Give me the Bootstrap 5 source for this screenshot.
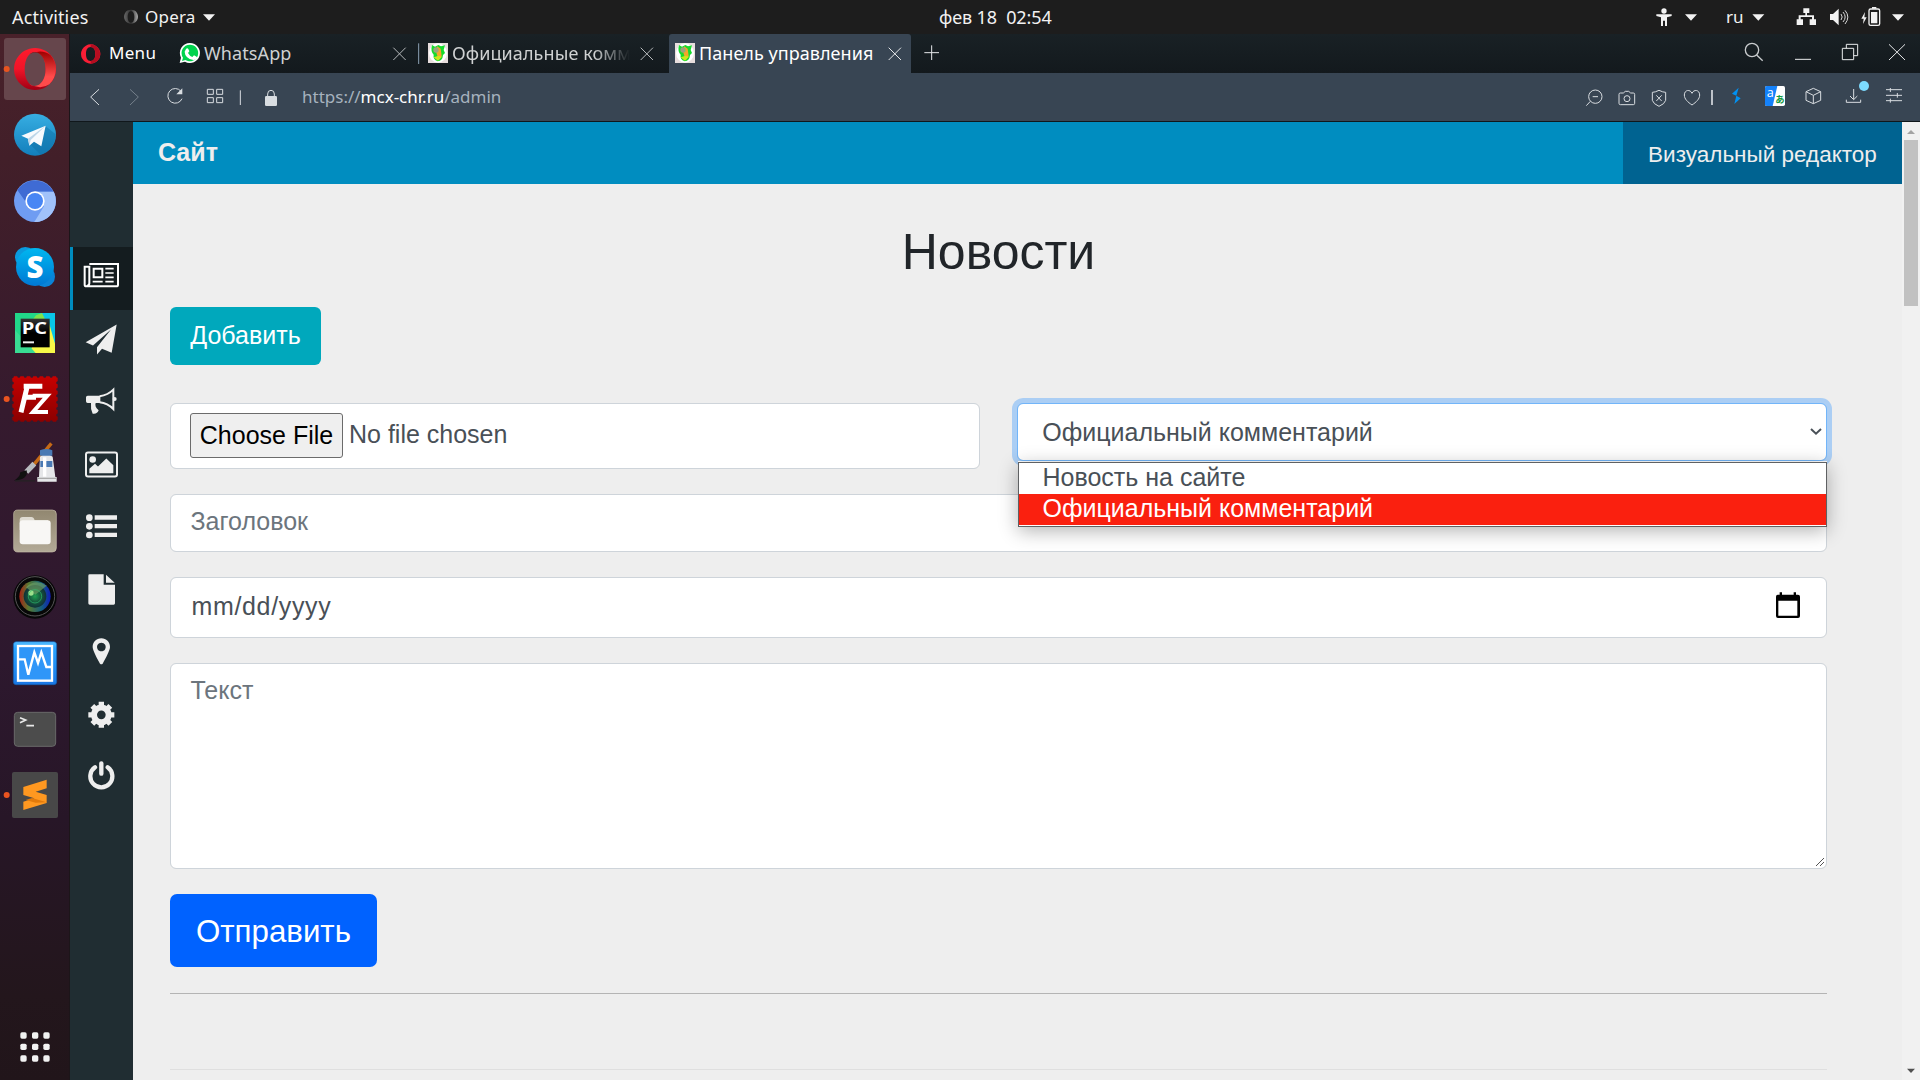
<!DOCTYPE html>
<html lang="ru">
<head>
<meta charset="utf-8">
<title>Панель управления</title>
<link href="https://cdn.jsdelivr.net/npm/bootstrap@5.3.0/dist/css/bootstrap.min.css" rel="stylesheet">
<style>
html{font-size:25px}
body{font-family:"Liberation Sans",Arial,sans-serif;background:#eee;width:1920px;height:1080px;overflow:hidden;color:#212529}
svg{display:block;flex:none}
.sysbar{height:34px;background:#1d1d1d;color:#f2f2f2}
.ubu{font-family:"Noto Sans","Open Sans",sans-serif;font-size:17px;white-space:pre;line-height:24px}
.clock{left:939px;top:5px;font-size:18px;letter-spacing:-.1px}
.dock{width:70px;background:linear-gradient(#49212a 0,#421f29 12%,#351a2e 36%,#2d182e 60%,#271627 75%,#23161c 92%,#21151a 100%);padding-top:2px;border-right:1px solid #1c1519}
.tabstrip{height:39px;background:linear-gradient(#192125,#13191d)}
.tabstrip .ubu{margin-bottom:2px}
.tab-act{background:#384553;border-radius:3px 3px 0 0}
.addr{height:49px;background:#384553;border-bottom:1px solid #10171b;color:#a6b2be}
.fade-end{width:178px;-webkit-mask-image:linear-gradient(90deg,#000 80%,transparent)}
.side{width:63px;background:#202d32;padding-top:5rem}
.side a{height:2.5rem;flex:none}
.side a.on{background:#141c1f;box-shadow:inset 3px 0 #008dbf}
.topnav{height:62px;background:#008dc0}
.brand-text{color:#eee;padding-left:25px;font-size:25px}
.visual{background:#006391;color:#eee;font-size:22.5px;width:279px;height:62px;padding-top:4px}
.main-col{width:1769px}
.content{padding:1.5rem 75px 0 37px}
.form-control{border-color:#ced4da;color:#495057;border-radius:6px;padding-left:19.5px}
.form-control::placeholder{color:#6c757d;opacity:1}
.btn-teal{background:#00a8bc;color:#fff;border-radius:6px;width:151px}
.btn-go{background:#0062ff;color:#fff;border-radius:7px;height:73px;padding-top:14px}
.h-file{height:66px;padding-top:9px;padding-left:19px}
.pick{background:#efefef;border:1px solid #6b6b6b;border-radius:3px;color:#000;width:153px;height:45px;line-height:43px}
.sel{height:58px;border-color:#72b5f9;box-shadow:0 0 0 5px #abcef4;padding-left:24px;padding-right:3px}
.pop{top:59px;left:19px;width:809px;height:65px;border:1px solid #5f6163;background:#fff;box-shadow:0 4px 18px rgba(0,0,0,.3),0 -1px 0 #fff;z-index:5;color:#495057}
.pop div{height:31px;padding-left:24px;line-height:28px}
.pop .hot{background:#fa200f;color:#fff}
.h-date{height:61px;padding-bottom:11px}
.h-date span{letter-spacing:.65px;padding-left:1px}
.h-title{height:58px;padding-bottom:11px}
textarea.form-control{height:206px;resize:none;padding-top:8px}
.grip{right:2px;bottom:2px}
.rule{height:1px;background:#b4b4b4}
.rule2{height:1px;background:#dfdfdf}
.sbar{width:18px;background:#f1f1f1}
.thumb{width:14px;height:166px;background:#c1c1c1}
.form-gap{margin-bottom:25px}
.ic text{font-family:"Open Sans",sans-serif}
</style>
</head>
<body class="d-flex flex-column">
<header class="sysbar d-flex align-items-center position-relative flex-shrink-0">
  <span class="ubu" style="margin-left:12px;width:111px;font-size:18px;letter-spacing:.15px">Activities</span>
  <svg width="16" height="34" viewBox="369 0 48 102"><defs><linearGradient id="gr"><stop stop-color="#666"/><stop offset=".5" stop-color="#333"/><stop offset="1" stop-color="#aaa"/></linearGradient></defs><path fill="url(#gr)" fill-rule="evenodd" d="M393 29a21 21 0 1 0 .1 0zM393 34c7 0 10 8 10 17s-3 17-10 17-10-8-10-17 3-17 10-17z"/></svg>
  <span class="ubu" style="margin-left:6px;width:57px;letter-spacing:.2px">Opera</span>
  <svg width="14" height="34" viewBox="606 0 42 102"><path fill="#f2f2f2" d="M609 43h36l-18 19z"/></svg>
  <span class="ubu clock position-absolute">фев 18  02:54</span>
  <div class="d-flex ms-auto align-items-center">
    <svg width="70" height="34" viewBox="330 0 210 102" fill="#f2f2f2"><circle cx="372" cy="33" r="8"/><path d="M349 43h46v5l-14 4v26h-6V62h-6v16h-6V52l-14-4zM435 43h36l-18 19z"/></svg>
    <span class="ubu" style="width:28px;padding-left:6px">ru</span>
    <svg width="172" height="34" viewBox="624 0 516 102" fill="#f2f2f2"><path d="M637 43h36l-18 19zM1056 43h36l-18 19z"/><path d="M790 25h18v14h-7v7h21v12h6v17h-19V58h7v-7h-34v7h7v17h-19V58h6V46h20v-7h-6zM870 42h9l17-16v50l-17-16h-9z"/><path d="M903 42q7 9 0 18M909 36q13 15 0 30M915 31q17 20 0 41" fill="none" stroke="#d8d8d8" stroke-width="3"/><path d="M975 36l-11 20h7l-2 16 11-20h-7z"/><rect x="987" y="27" width="32" height="49" rx="5" fill="none" stroke="#f2f2f2" stroke-width="4"/><path d="M996 21h13v5h-13zM993 36h19v34h-19z"/></svg>
  </div>
</header>

<div class="d-flex flex-grow-1">
<nav class="dock ic d-flex flex-column flex-shrink-0">
  <svg width="70" height="66" viewBox="0 18 210 198"><defs><linearGradient id="o1" x2="0" y2="1"><stop stop-color="#ff1b2d"/><stop offset=".5" stop-color="#f01428"/><stop offset="1" stop-color="#a00014"/></linearGradient><linearGradient id="o2" x2="0" y2="1"><stop stop-color="#9c0000"/><stop offset=".7" stop-color="#ff4b4b"/></linearGradient></defs><rect x="12" y="24" width="186" height="186" rx="9" fill="#66464c"/><circle cx="20" cy="117" r="9" fill="#e95420"/><path fill="url(#o1)" fill-rule="evenodd" d="M105 54a63 63 0 1 0 .1 0zM105 66c19 0 32 22 32 51s-13 51-32 51-31-22-31-51 13-51 31-51z"/><path fill="url(#o2)" d="M88 72q39-17 63 3a63 63 0 0 1-3 88q-25 17-60 0c27 16 49-10 49-46s-22-61-49-45z"/></svg>
  <svg width="70" height="66" viewBox="0 216 210 198"><defs><linearGradient id="t1" x2="0" y2="1"><stop stop-color="#37aee2"/><stop offset="1" stop-color="#127fbc"/></linearGradient></defs><circle cx="105" cy="314" r="63" fill="url(#t1)"/><path fill="#0d6fa5" opacity=".5" d="M136 288l31 25a63 63 0 0 1-45 61l-35-34z"/><path fill="#f6fafd" d="M137 287L64 317l20 9 4 21 14-12 22 14z"/><path fill="#bcd6e8" d="M137 287l-53 39 4 21 4-17z"/></svg>
  <svg width="70" height="66" viewBox="0 414 210 198"><circle cx="105" cy="513" r="63" fill="#6f9cf2"/><path fill="#3f6bd4" d="M52 480a63 63 0 0 1 108 5h-55l-28 30z"/><path fill="#a1c2fa" d="M105 485h56a63 63 0 0 1-58 91l29-47z"/><circle cx="105" cy="513" r="29" fill="#fff"/><circle cx="105" cy="513" r="24" fill="#4886f4"/></svg>
  <svg width="70" height="66" viewBox="0 612 210 198"><defs><linearGradient id="s1" x2="0" y2="1"><stop stop-color="#00b7f0"/><stop offset="1" stop-color="#0078d4"/></linearGradient></defs><circle cx="76" cy="682" r="31" fill="#0a9ade"/><circle cx="134" cy="740" r="31" fill="#0a84d8"/><circle cx="105" cy="711" r="57" fill="url(#s1)"/><text x="105" y="743" text-anchor="middle" font-size="88" font-weight="800" fill="#fff">S</text></svg>
  <svg width="70" height="66" viewBox="0 810 210 198"><path fill="#21d789" d="M45 849h120v120H45z"/><path fill="#09c6e8" d="M118 849h47v95z"/><path fill="#7fe34b" d="M108 856l18-7 10 20H98z"/><path fill="#f8f848" d="M84 969l63-90 18 62v28z"/><path fill="#39dc93" d="M45 900v69h62z"/><defs><linearGradient id="pk" x2="0" y2="1"><stop stop-color="#333"/><stop offset=".5"/></linearGradient></defs><path fill="url(#pk)" d="M62 866h87v86H62z"/><text x="65" y="912" font-size="48" font-weight="700" fill="#fff" textLength="76" lengthAdjust="spacingAndGlyphs">PC</text><path fill="#eee" d="M69 934h33v6H69z"/></svg>
  <svg width="70" height="66" viewBox="0 18 210 198"><defs><linearGradient id="fz" x2="0" y2="1"><stop stop-color="#c60000"/><stop offset="1" stop-color="#8c0000"/></linearGradient></defs><circle cx="20" cy="117" r="9" fill="#e95420"/><path fill="url(#fz)" d="M37 49h136v136H37z"/><path d="M37 49h136v136H37z" fill="none" stroke="#351a2e" stroke-width="9" stroke-dasharray="0 19.4" stroke-linecap="round"/><path fill="none" stroke="#fff" stroke-width="15" d="M63 157l18-75M71 79h56M73 112h35"/><path fill="none" stroke="#fff" stroke-width="12" d="M98 107h44l-43 49h45"/></svg>
  <svg width="70" height="66" viewBox="0 216 210 198"><path stroke="#c56a16" stroke-width="10" d="M154 250l-55 67"/><path stroke="#b9bcc0" stroke-width="16" d="M103 311l-24 25"/><path fill="#111" d="M80 331q6 28-38 31 18-11 19-25z"/><path fill="#222" opacity=".7" d="M45 360h60v5H45z"/><path fill="#e6e7e9" d="M120 290q19-14 38 0l8 61h4v14h-58v-14h5z"/><path fill="#4a7ab4" d="M120 271q19-8 37 0v16h-37zM121 303h36v18h-36z"/><path fill="#fff" d="M129 292h10v58h-10z"/><path fill="#aaa" d="M112 353h58v4h-58z"/></svg>
  <svg width="70" height="66" viewBox="0 414 210 198"><defs><linearGradient id="fl" x2="0" y2="1"><stop stop-color="#918770"/><stop offset="1" stop-color="#b3aa97"/></linearGradient></defs><rect x="41" y="450" width="128" height="126" rx="12" fill="url(#fl)" stroke="#c5bda9" stroke-width="2"/><path fill="#dfdbd1" d="M59 510v-30q0-9 9-9h26q7 0 10 10h40v30z"/><rect x="59" y="481" width="93" height="72" rx="9" fill="#f8f7f5"/></svg>
  <svg width="70" height="66" viewBox="0 612 210 198"><defs><radialGradient id="ln"><stop stop-color="#20a050"/><stop offset=".5" stop-color="#175b3d"/><stop offset="1" stop-color="#103038"/></radialGradient><linearGradient id="l2"><stop stop-color="#a52116"/><stop offset=".3" stop-color="#577b32"/><stop offset=".7" stop-color="#15607b"/><stop offset="1" stop-color="#101cbb"/></linearGradient></defs><circle cx="105" cy="711" r="65" fill="#070707"/><circle cx="105" cy="709" r="59" fill="none" stroke="#555" stroke-width="3"/><circle cx="105" cy="709" r="47" fill="url(#l2)"/><circle cx="105" cy="709" r="34" fill="url(#ln)"/><path fill="#6ea064" opacity=".65" d="M78 682q28-27 62-5l-34 27z"/><circle cx="93" cy="699" r="8" fill="#9ce08b"/><circle cx="105" cy="709" r="20" fill="none" stroke="#2fc573" stroke-width="3" opacity=".6"/></svg>
  <svg width="70" height="66" viewBox="0 810 210 198"><defs><linearGradient id="vb" x2="0" y2="1"><stop stop-color="#54bdff"/><stop offset=".15" stop-color="#29a3ff"/><stop offset="1" stop-color="#1977e5"/></linearGradient></defs><rect x="40" y="845" width="130" height="129" rx="9" fill="url(#vb)" stroke="#125dad" stroke-width="2"/><rect x="54" y="858" width="102" height="104" fill="#2f96f8" stroke="#fff" stroke-width="7"/><path fill="none" stroke="#fff" stroke-width="7" d="M57 898h17l11 46 18-67 11 32 10-32 15 44h16"/></svg>
  <svg width="70" height="66" viewBox="0 18 210 198"><rect x="43" y="67" width="124" height="102" rx="10" fill="#4c4c4c" stroke="#696969" stroke-width="3"/><path fill="none" stroke="#e8e8e8" stroke-width="5" d="M60 83l17 7-17 8M79 107h23"/></svg>
  <svg width="70" height="66" viewBox="0 216 210 198"><rect x="36" y="246" width="138" height="138" rx="6" fill="#484848"/><circle cx="20" cy="315" r="9" fill="#e95420"/><path fill="#ff9820" d="M70 291l70-22v26l-33 10 33 10v24l-70 21v-25l33-10-33-10z"/><path fill="#e27a0b" d="M96 324l44 13-33 1-30-8z"/></svg>
  <svg class="mt-auto" width="70" height="66" viewBox="0 972 210 198" fill="#f2f2f2"><g id="dots"><rect x="61" y="1027" width="19" height="19" rx="5"/><rect x="96" y="1027" width="19" height="19" rx="5"/><rect x="130" y="1027" width="19" height="19" rx="5"/></g><use href="#dots" y="34"/><use href="#dots" y="69"/></svg>
</nav>

<div class="d-flex flex-column flex-grow-1">
  <div class="tabstrip d-flex text-light flex-shrink-0">
    <div class="d-flex" style="width:102px"><svg width="35" height="39" viewBox="210 102 105 117"><path fill="#fa1e35" fill-rule="evenodd" d="M272 133a29 29 0 1 0 .1 0zM272 141c10 0 14 9 14 21s-4 21-14 21-14-9-14-21 4-21 14-21z"/><path fill="#b50d20" d="M272 133a29 29 0 0 1 0 58v-8c10 0 14-9 14-21s-4-21-14-21z"/></svg><span class="ubu align-self-center" style="color:#fff;letter-spacing:.3px;padding-left:4px">Menu</span></div>
    <div class="d-flex" style="width:248px"><svg width="32" height="39" viewBox="516 102 96 117"><path fill="#fff" d="M570 129a30 30 0 1 1-15 56l-16 4 4-16a30 30 0 0 1 27-44z"/><path fill="#00d34d" d="M570 134a25 25 0 1 1-14 46l-10 3 3-10a25 25 0 0 1 21-39z"/><path fill="#fff" d="M558 147q4-4 7 0l3 7-4 5q5 9 13 12l5-5 9 5q0 9-11 9-25-5-26-25z"/></svg><span class="ubu align-self-center flex-grow-1" style="color:#cfd1d2;font-size:18px;letter-spacing:.1px">WhatsApp</span><svg width="33" height="39" viewBox="1161 102 99 117" fill="none" stroke="#b6b9bb" stroke-width="3"><path d="M1180 143l37 37M1217 143l-37 37"/><path d="M1256 130v62" stroke="#8ba0b4"/></svg></div>
    <div class="d-flex" style="width:249px"><svg width="32" height="39" viewBox="1260 102 96 117"><g id="fav"><path fill="#e8dede" d="M1284 129h60v60h-60z"/><ellipse cx="1314" cy="159" rx="27" ry="29" fill="#fff"/><path fill="#16db2c" d="M1296 135l9 5 10-5 8 4 12-3-4 14 4 9-6 6q-1 17-16 19-15-6-12-20-10-10-5-29z"/><path fill="#f5a52a" d="M1311 139l11 7 3 22-9 12-7-22z"/><circle cx="1308" cy="150" r="8" fill="#99a47d"/><path fill="#cbe51c" d="M1301 172l15-5 10 3-12 12z"/></g></svg><span class="ubu align-self-center fade-end" style="color:#cfd1d2;font-size:18px;letter-spacing:.1px">Официальные комм</span><svg width="36" height="39" viewBox="0 0 108 117" fill="none" stroke="#b6b9bb" stroke-width="3"><path d="M32 41l37 37M69 41l-37 37"/></svg></div>
    <div class="tab-act d-flex" style="width:242px"><svg width="28" height="39" viewBox="1266 102 84 117"><use href="#fav"/></svg><span class="ubu align-self-center flex-grow-1" style="color:#fff;padding-left:2px;font-size:18px;letter-spacing:.05px">Панель управления</span><svg width="33" height="39" viewBox="0 0 99 117" fill="none" stroke="#e6e8ea" stroke-width="3"><path d="M32 41l37 37M69 41l-37 37"/></svg></div>
    <svg width="40" height="39" viewBox="0 0 120 117" stroke="#e6e8ea" stroke-width="3"><path d="M40 56h44M62 34v44"/></svg>
    <svg class="ms-auto" width="180" height="39" viewBox="600 102 540 117" fill="none" stroke="#e9ebec" stroke-width="3"><g stroke="#c9ccce" stroke-width="4"><circle cx="636" cy="150" r="20"/><path d="M650 165l18 17"/></g><path d="M765 178h48M907 145h34v34h-34zM919 145v-12h34v34h-12M1047 133l48 47M1095 133l-48 47"/></svg>
  </div>
  <div class="addr d-flex align-items-center flex-shrink-0">
    <svg width="222" height="48" viewBox="210 219 666 144" fill="none" stroke="#d9dde1" stroke-width="3"><path d="M297 268l-25 23 25 24"/><path d="M390 268l25 23-25 24" stroke="#75808b"/><path d="M546 296a22 22 0 1 1-3-22"/><path d="M547 265v18h-18z" fill="#d9dde1" stroke="none"/><path d="M622 268h18v15h-18zM650 268h18v15h-18zM622 293h18v15h-18zM650 293h18v15h-18zM721 271v44"/><path d="M803 291v-9q0-11 10-11t10 11v9"/><rect x="795" y="288" width="36" height="30" rx="4" fill="#d9dde1" stroke="none"/></svg>
    <span class="ubu" style="margin-left:10px">https://<span class="text-white">mcx-chr.ru</span>/admin</span>
    <svg class="ms-auto ic" width="342" height="48" viewBox="114 219 1026 144" fill="none" stroke="#d9dde1" stroke-width="3"><circle cx="166" cy="290" r="20"/><path d="M151 304l-12 13M158 290h16"/><path d="M241 279h9l6-5h10l6 5h8q4 0 4 4v27q0 4-4 4h-39q-4 0-4-4v-27q0-4 4-4z"/><circle cx="261" cy="296" r="9"/><path d="M357 271q12 6 20 6v24q-3 11-20 18-17-7-20-18v-24q8 0 20-6zM349 286l16 17M365 286l-16 17M456 315c-13-9-23-18-23-30 0-16 18-18 23-5 5-13 23-11 23 5 0 12-10 21-23 30z"/><path d="M516 270v45" stroke-width="5"/><path d="M596 263l-20 18 13 6-6 25 19-17-13-8z" fill="#0091f2" stroke="none"/><g stroke="none"><rect x="675" y="258" width="60" height="60" rx="5" fill="#fff"/><path d="M680 258h32l-14 60h-18q-5 0-5-5v-50q0-5 5-5z" fill="#1582fa"/><text x="680" y="290" font-size="38" fill="#fff">a</text><text x="706" y="309" font-size="28" fill="#139a41" style="font-family:'Noto Sans CJK JP',sans-serif;font-weight:700">あ</text></g><path d="M820 265l22 10v26l-22 10-22-10v-26zM798 275l22 11 22-11M820 286v25M941 267v31M930 288l11 11 11-11M919 299v8h43v-8M1038 269h48M1038 286h48M1038 302h48M1051 264v12M1072 279v14M1051 296v12"/><circle cx="972" cy="258" r="15" fill="#7ddcff" stroke="none"/></svg>
  </div>

  <div class="d-flex flex-grow-1">
    <nav class="side d-flex flex-column flex-shrink-0">
      <a class="on"><svg width="63" height="62.5" viewBox="210 651 189 187.5"><path fill="none" stroke="#fff" stroke-width="6" d="M268 702h86v62q0 5-5 5h-90q-5 0-5-5v-54h14v50q0 6-7 8"/><path fill="none" stroke="#fff" stroke-width="6" d="M281 716h26v26h-26z"/><path stroke="#fff" stroke-width="5" d="M316 716h25M316 729h25M316 742h25M278 755h30M316 755h25"/></svg></a>
      <a><svg width="63" height="62.5" viewBox="210 838.5 189 187.5" fill="#eee"><path d="M350 882l-93 53 22 10 54-48-42 53v22l15-17 29 12z"/></svg></a>
      <a><svg width="63" height="62.5" viewBox="210 36 189 187.5"><path fill="#eee" d="M263 107h38v22h-14q-4 11 9 22-4 12-18 10-7-14-5-32h-10q-5 0-5-5v-12q0-5 5-5z"/><path fill="none" stroke="#eee" stroke-width="6" d="M299 109q25-4 41-20v58q-17-17-41-20"/><circle cx="344" cy="117" r="6" fill="#eee"/></svg></a>
      <a><svg width="63" height="62.5" viewBox="210 223.500 189 187.5"><rect x="258" y="276" width="93" height="72" rx="6" fill="none" stroke="#eee" stroke-width="6"/><circle cx="278" cy="297" r="10" fill="#eee"/><path fill="#eee" d="M268 338v-13l17-15 9 8 25-24 21 20v24z"/></svg></a>
      <a><svg width="63" height="62.5" viewBox="210 411 189 187.5" fill="#eee"><circle cx="268" cy="473" r="10"/><circle cx="268" cy="499" r="10"/><circle cx="268" cy="525" r="10"/><path d="M284 466h67v13h-67zM284 492h67v13h-67zM284 518h67v13h-67z"/></svg></a>
      <a><svg width="63" height="62.5" viewBox="210 600 189 187.5" fill="#eee"><path d="M269 643h42v31h34v56q0 4-4 4h-72q-4 0-4-4v-83q0-4 4-4zM318 644l26 24h-26z"/></svg></a>
      <a><svg width="63" height="62.5" viewBox="210 786 189 187.5"><path fill="#eee" fill-rule="evenodd" d="M304 835c15 0 26 11 26 26 0 10-13 34-22 50q-4 4-8 0c-9-16-22-40-22-50 0-15 11-26 26-26zm0 13a13 13 0 1 0 .1 0z"/></svg></a>
      <a><svg width="63" height="62.5" viewBox="210 -16.500 189 187.5"><circle cx="304" cy="73" r="22" fill="none" stroke="#eee" stroke-width="18"/><g stroke="#eee" stroke-width="16"><path d="M304 34v14M304 98v14M265 73h14M329 73h14M277 46l9 9M322 91l9 9M277 100l9-9M322 55l9-9"/></g></svg></a>
      <a><svg width="63" height="62.5" viewBox="210 171 189 187.5" fill="none" stroke="#eee" stroke-width="13" stroke-linecap="round"><path d="M304 220v31M285 232a33 33 0 1 0 38 0"/></svg></a>
    </nav>
    <div class="main-col d-flex flex-column">
      <div class="topnav d-flex align-items-center justify-content-between">
        <b class="brand-text">Сайт</b>
        <a class="visual d-flex align-items-center justify-content-center text-decoration-none">Визуальный редактор</a>
      </div>
      <main class="content">
        <h2 class="text-center fw-normal mb-3">Новости</h2>
        <button class="btn btn-teal">Добавить</button>
        <form style="padding-top:38.5px">
          <div class="row" style="margin-bottom:24.500px">
            <div class="col-6"><div class="form-control h-file d-flex align-items-start"><span class="pick text-center">Choose File</span><span style="padding-left:6px;line-height:43px">No file chosen</span></div></div>
            <div class="col-6 position-relative">
              <div class="form-control sel d-flex align-items-center justify-content-between"><span>Официальный комментарий</span><svg width="14" height="10" viewBox="0 0 42 30"><path d="M6 6l15 14L36 6" fill="none" stroke="#495057" stroke-width="6"/></svg></div>
              <div class="pop position-absolute"><div>Новость на сайте</div><div class="hot">Официальный комментарий</div></div>
            </div>
          </div>
          <input class="form-control form-gap h-title" placeholder="Заголовок">
          <div class="form-control h-date form-gap d-flex align-items-center justify-content-between"><span>mm/dd/yyyy</span><svg width="26" height="28" viewBox="0 0 78 84" style="margin-right:6px"><path fill-rule="evenodd" d="M8 8h6V1h7v7h35V1h7v7h6q6 0 6 6v58q0 6-6 6H9q-6 0-6-6V14q0-6 5-6zm2 18v45h57V26z"/></svg></div>
          <div class="position-relative form-gap"><textarea class="form-control d-block" placeholder="Текст"></textarea>
            <svg class="grip position-absolute" width="10" height="10" viewBox="0 0 10 10" stroke="#555" shape-rendering="crispEdges"><path d="M1 9l8-8M5 9l4-4"/></svg></div>
          <button class="btn btn-lg btn-go d-block" type="button">Отправить</button>
        </form>
        <div class="rule" style="margin-top:26px"></div>
        <div class="rule2" style="margin-top:75px"></div>
      </main>
    </div>
    <div class="sbar d-flex flex-column align-items-center">
      <svg width="18" height="18" viewBox="0 0 54 54"><path fill="#a3a3a3" d="M15 36h24L27 24z"/></svg>
      <div class="thumb"></div>
      <svg class="mt-auto" width="18" height="18" viewBox="0 0 54 54"><path fill="#505050" d="M15 20h24L27 33z"/></svg>
    </div>
  </div>
</div>
</div>
<script src="https://cdn.jsdelivr.net/npm/bootstrap@5.3.0/dist/js/bootstrap.bundle.min.js"></script>
</body>
</html>
